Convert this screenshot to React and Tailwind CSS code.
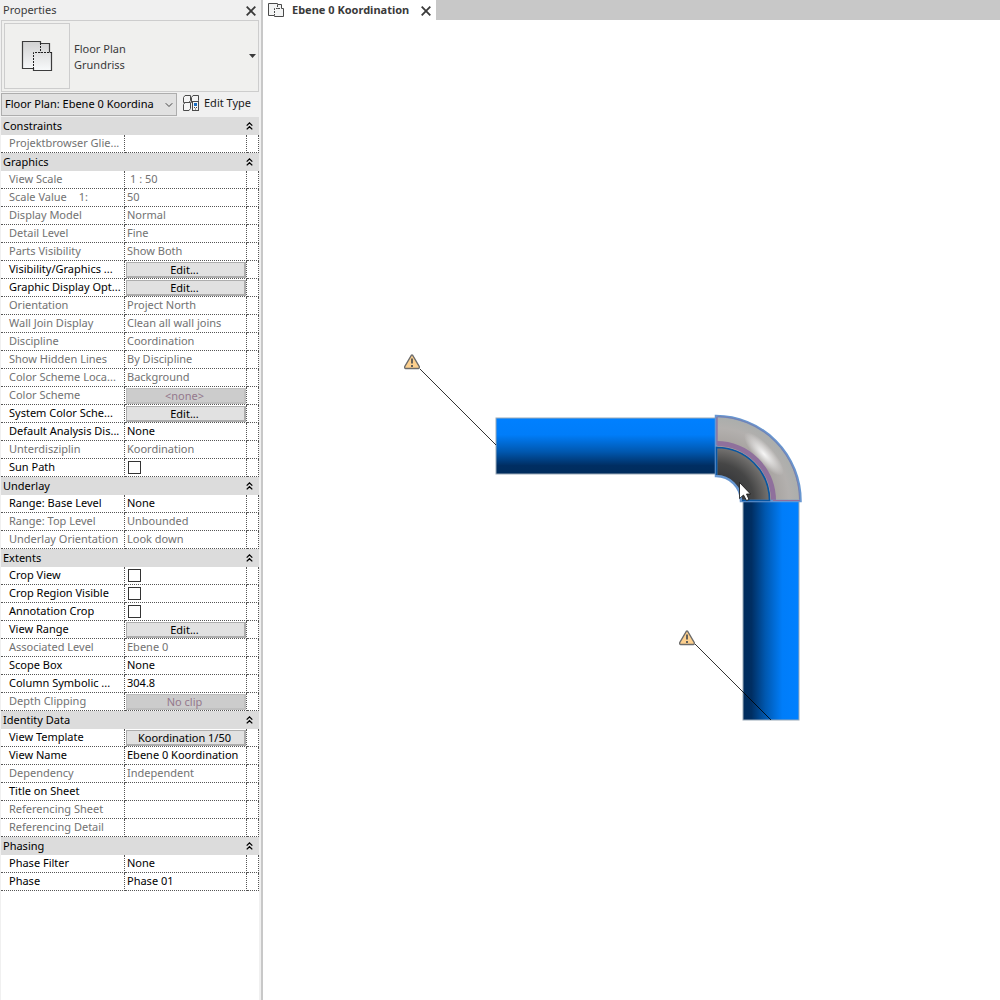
import { ChevronDown } from 'lucide-react';

const sections = [
  {
    title: 'Constraints',
    rows: [{ label: 'Projektbrowser Glie...', value: '', readOnly: true }],
  },
  {
    title: 'Graphics',
    rows: [
      { label: 'View Scale', value: '1 : 50', readOnly: true, indent: true },
      { label: 'Scale Value', suffix: '1:', value: '50', readOnly: true },
      { label: 'Display Model', value: 'Normal', readOnly: true },
      { label: 'Detail Level', value: 'Fine', readOnly: true },
      { label: 'Parts Visibility', value: 'Show Both', readOnly: true },
      { label: 'Visibility/Graphics ...', value: 'Edit...', type: 'button' },
      { label: 'Graphic Display Opt...', value: 'Edit...', type: 'button' },
      { label: 'Orientation', value: 'Project North', readOnly: true },
      { label: 'Wall Join Display', value: 'Clean all wall joins', readOnly: true },
      { label: 'Discipline', value: 'Coordination', readOnly: true },
      { label: 'Show Hidden Lines', value: 'By Discipline', readOnly: true },
      { label: 'Color Scheme Loca...', value: 'Background', readOnly: true },
      { label: 'Color Scheme', value: '<none>', type: 'button', readOnly: true },
      { label: 'System Color Sche...', value: 'Edit...', type: 'button' },
      { label: 'Default Analysis Dis...', value: 'None' },
      { label: 'Unterdisziplin', value: 'Koordination', readOnly: true },
      { label: 'Sun Path', type: 'checkbox' },
    ],
  },
  {
    title: 'Underlay',
    rows: [
      { label: 'Range: Base Level', value: 'None' },
      { label: 'Range: Top Level', value: 'Unbounded', readOnly: true },
      { label: 'Underlay Orientation', value: 'Look down', readOnly: true },
    ],
  },
  {
    title: 'Extents',
    rows: [
      { label: 'Crop View', type: 'checkbox' },
      { label: 'Crop Region Visible', type: 'checkbox' },
      { label: 'Annotation Crop', type: 'checkbox' },
      { label: 'View Range', value: 'Edit...', type: 'button' },
      { label: 'Associated Level', value: 'Ebene 0', readOnly: true },
      { label: 'Scope Box', value: 'None' },
      { label: 'Column Symbolic ...', value: '304.8' },
      { label: 'Depth Clipping', value: 'No clip', type: 'button', readOnly: true },
    ],
  },
  {
    title: 'Identity Data',
    rows: [
      { label: 'View Template', value: 'Koordination 1/50', type: 'button' },
      { label: 'View Name', value: 'Ebene 0 Koordination' },
      { label: 'Dependency', value: 'Independent', readOnly: true },
      { label: 'Title on Sheet', value: '' },
      { label: 'Referencing Sheet', value: '', readOnly: true },
      { label: 'Referencing Detail', value: '', readOnly: true },
    ],
  },
  {
    title: 'Phasing',
    rows: [
      { label: 'Phase Filter', value: 'None' },
      { label: 'Phase', value: 'Phase 01' },
    ],
  },
];

const CloseIcon = () => (
  <svg width="10" height="10" viewBox="0 0 10 10" fill="none" stroke="#3a3a3a" strokeWidth="1.8">
    <path d="M0.7 0.7 L9.3 9.3 M9.3 0.7 L0.7 9.3" />
  </svg>
);

const CollapseIcon = () => (
  <svg width="7" height="8" viewBox="0 0 7 8" fill="none" stroke="#000" strokeWidth="1.3">
    <path d="M0.7 3.6 L3.5 0.9 L6.3 3.6 M0.7 7.4 L3.5 4.7 L6.3 7.4" />
  </svg>
);

const FloorPlanIcon = () => (
  <svg width="32" height="32" viewBox="0 0 32 32" fill="none">
    <defs>
      <linearGradient id="sheet" x1="0" y1="0" x2="0" y2="1">
        <stop offset="0" stopColor="#d2d2d2" />
        <stop offset="1" stopColor="#f8fafb" />
      </linearGradient>
    </defs>
    <path d="M1.5 1.5 H19.5 V3.5 H28.5 V12.5 H30.5 V30.5 H12.5 V28.5 H1.5 Z" fill="url(#sheet)" />
    <path d="M12.5 28.5 H1.5 V1.5 H19.5 V3.5 H28.5 V12.5 M30.5 12 V30.5 H12.5 V28" stroke="#3c3c3c" strokeWidth="1.2" />
    <path d="M19.5 3 V12.5 M31 12.5 H12.5 V29" stroke="#222" strokeDasharray="2 1" />
  </svg>
);

const TabIcon = () => (
  <svg width="16" height="15" viewBox="0 0 16 15" fill="none" stroke="#4a4a4a">
    <path d="M0.5 0.5 H9.5 V1.5 H13.5 V5.5 H15.5 V13.5 H6.5 V12.5 H0.5 Z" fill="#f3f4f4" />
    <path d="M9.5 2 V5.5 H6.5 V12 M10 5.5 H13" strokeDasharray="2 1" />
  </svg>
);

const EditTypeIcon = () => (
  <svg width="17" height="17" viewBox="0 0 17 17" fill="none">
    <g fill="#f4f4f4" stroke="#4a4a4a">
      <path d="M0.5 2.5 L2 0.5 H7.5 V5.5 L6 7.5 H0.5 Z" />
      <path d="M8.5 2.5 L10 0.5 H15.5 V5.5 L14 7.5 H8.5 Z" />
      <path d="M0.5 9.5 L2 7.5 H7.5 V13.5 L6 15.5 H0.5 Z" />
      <rect x="9.5" y="6.5" width="6" height="9" />
    </g>
    <rect x="11" y="8" width="3" height="3" fill="#1b6ec2" />
    <path d="M11 12.5 H12 M13 12.5 H14 M12 14 H13" stroke="#4a4a4a" />
  </svg>
);

const PropertyValue = ({ row, id }) => {
  if (row.type === 'button') {
    return (
      <button
        id={id}
        disabled={row.readOnly}
        className="mt-px ml-px block h-4 w-[120px] border border-r-2 border-b-2 border-[#adadad] bg-[#e1e1e1] pr-[2px] text-center leading-[14px] text-black disabled:border-[#bfbfbf] disabled:bg-[#cccccc] disabled:text-[#94798c]"
      >
        {row.value}
      </button>
    );
  }
  if (row.type === 'checkbox') {
    return <input id={id} type="checkbox" className="mt-[2px] ml-[3px] block size-[13px] appearance-none border border-[#333333] bg-white checked:bg-[#333333]" />;
  }
  return <div className={row.indent ? 'h-[17px] pl-[5px]' : 'h-[17px] pl-[2px]'}>{row.value}</div>;
};

const PropertyRow = ({ row }) => {
  const id = row.label.toLowerCase().replace(/[^a-z]+/g, '-');
  const isControl = Boolean(row.type);
  return (
    <tr className={row.readOnly ? 'text-[#727272]' : 'text-black'}>
      <th scope="row" className="h-[18px] border-r border-b border-dotted border-[#555555] p-0 text-left align-top font-normal whitespace-nowrap">
        <div className="h-[17px] pl-2 leading-[15px]">
          {isControl ? <label htmlFor={id}>{row.label}</label> : row.label}
          {row.suffix && <span className="pl-3">{row.suffix}</span>}
        </div>
      </th>
      <td className="h-[18px] border-r border-b border-dotted border-[#555555] p-0 align-top leading-[15px] whitespace-nowrap">
        <PropertyValue row={row} id={id} />
      </td>
      <td className="h-[18px] border-r border-b border-dotted border-[#555555] p-0" />
    </tr>
  );
};

const PropertiesPanel = () => (
  <aside className="flex w-[263px] shrink-0 flex-col border-r-2 border-[#c8c8c8] bg-[#f0f0f0] pr-[2px] pl-px">
    <header className="flex h-5 items-center justify-between pt-px pr-[3px] pl-[2px] text-[#3a3a3a]">
      <h1>Properties</h1>
      <button aria-label="Close properties"><CloseIcon /></button>
    </header>

    {/* Type selector */}
    <button className="flex items-center border border-[#cdcdcd] bg-[#f0f0ee] p-[2px] text-left text-[#3a3a3a]">
      <span className="flex size-[66px] items-center justify-center border border-[#cdcdcd]">
        <FloorPlanIcon />
      </span>
      <span className="flex-1 pt-px pl-1 leading-4">
        Floor Plan
        <br />
        Grundriss
      </span>
      <svg width="7" height="4" viewBox="0 0 7 4"><path d="M0 0 H7 L3.5 4 Z" fill="#3a3a3a" /></svg>
    </button>

    <div className="flex items-center pt-px pb-px">
      <div className="relative">
        <select aria-label="Instance" className="block h-[23px] w-[176px] appearance-none border border-[#adadad] bg-[#e1e1e1] pr-4 pl-[3px] text-black">
          <option>Floor Plan: Ebene 0 Koordina</option>
        </select>
        <ChevronDown className="pointer-events-none absolute top-[6px] right-[2px] size-3 text-[#444444]" strokeWidth={2} />
      </div>
      <button className="flex items-center gap-1 pb-[2px] pl-[6px] text-[#1a1a1a]">
        <EditTypeIcon />
        Edit Type
      </button>
    </div>

    <div className="flex-1 bg-white">
      <table className="w-full table-fixed border-separate border-spacing-0">
        <colgroup>
          <col className="w-[124px]" />
          <col className="w-[122px]" />
          <col />
        </colgroup>
        {sections.map((section) => (
          <tbody key={section.title}>
            <tr className="bg-[#dcdcdc] text-black">
              <th colSpan={3} className="h-[18px] p-0 font-normal">
                <button className="flex h-[18px] w-full items-center justify-between pr-[6px] pl-[2px]">
                  {section.title}
                  <CollapseIcon />
                </button>
              </th>
            </tr>
            {section.rows.map((row) => (
              <PropertyRow key={row.label} row={row} />
            ))}
          </tbody>
        ))}
      </table>
    </div>
  </aside>
);

const Warning = ({ x, y }) => (
  <g transform={`translate(${x} ${y})`}>
    <path d="M7.3 1.3 Q8 0.6 8.7 1.3 L15.3 12.6 Q15.6 14.5 14.4 14.5 H1.6 Q0.4 14.5 0.7 12.6 Z" fill="#fdd08e" stroke="#6b6b6b" strokeWidth="1.3" strokeLinejoin="round" />
    <path d="M8 4.5 V9.5 M8 11 V13" stroke="#555" strokeWidth="1.8" />
  </g>
);

const Drawing = () => (
  <svg width="737" height="980" viewBox="263 20 737 980" role="img" aria-label="Pipe elbow in floor plan" className="block">
    <defs>
      <linearGradient id="pipeH" x1="0" y1="0" x2="0" y2="1">
        <stop offset="0" stopColor="#0080ff" />
        <stop offset="0.3" stopColor="#007df9" />
        <stop offset="0.6" stopColor="#0058b0" />
        <stop offset="0.85" stopColor="#002e62" />
        <stop offset="1" stopColor="#002c5c" />
      </linearGradient>
      <linearGradient id="pipeV" x1="1" y1="0" x2="0" y2="0">
        <stop offset="0" stopColor="#0080ff" />
        <stop offset="0.3" stopColor="#007df9" />
        <stop offset="0.6" stopColor="#0058b0" />
        <stop offset="0.85" stopColor="#002e62" />
        <stop offset="1" stopColor="#002c5c" />
      </linearGradient>
      <radialGradient id="inner" gradientUnits="userSpaceOnUse" cx="716" cy="501" r="54">
        <stop offset="0.48" stopColor="#3a3b3d" />
        <stop offset="0.7" stopColor="#464646" />
        <stop offset="1" stopColor="#777573" />
      </radialGradient>
      <radialGradient id="outer" gradientUnits="userSpaceOnUse" cx="716" cy="501" r="86">
        <stop offset="0.65" stopColor="#a5a19e" />
        <stop offset="0.85" stopColor="#b3b0ae" />
        <stop offset="1" stopColor="#a9adab" />
      </radialGradient>
      <radialGradient id="shine">
        <stop offset="0" stopColor="#fff" stopOpacity="0.9" />
        <stop offset="1" stopColor="#fff" stopOpacity="0" />
      </radialGradient>
    </defs>

    <rect x="496" y="418" width="220" height="56" fill="url(#pipeH)" stroke="#9aa9b8" />
    <rect x="743" y="501" width="56" height="219" fill="url(#pipeV)" stroke="#9aa9b8" />

    {/* Elbow */}
    <path d="M716 416 A85 85 0 0 1 801 501 H741 A25 25 0 0 0 716 476 Z" fill="url(#outer)" />
    <ellipse cx="764" cy="454" rx="28" ry="9" transform="rotate(48 764 454)" fill="url(#shine)" />
    <path d="M716 447 A54 54 0 0 1 770 501 H741 A25 25 0 0 0 716 476 Z" fill="url(#inner)" />
    <path d="M716 443.5 A57.5 57.5 0 0 1 773.5 501" fill="none" stroke="#8f709c" strokeWidth="5" />
    <path d="M716 416 A85 85 0 0 1 800.500 501 H741 A25 25 0 0 0 716 476 Z" fill="none" stroke="#6796d0" strokeWidth="2.500" />
    <path d="M717 417 V445 M773 500.500 H800" stroke="#8f709c" strokeWidth="1.2" />
    <path d="M717.500 416.500 A84 84 0 0 1 799.500 499.500" fill="none" stroke="#80749f" strokeWidth="0.7" />
    <path d="M716.500 475 V447.500 A53 53 0 0 1 769.500 500.500 H742" fill="none" stroke="#0756a3" strokeWidth="1.6" />

    <g stroke="#000" strokeWidth="0.8">
      <path d="M420 369 L496 445" />
      <path d="M695 644 L771 720" />
    </g>
    <Warning x={404} y={354} />
    <Warning x={679} y={630} />

    {/* Pointer */}
    <path d="M739.500 482.500 V498.500 L743.500 495 L746.500 500.500 L749 499.500 L746.500 494 H750.500 Z" fill="#fff" stroke="#111" strokeWidth="0.8" />
  </svg>
);

const App = () => (
  <div className="flex min-h-screen bg-white font-['Noto_Sans','Open_Sans',sans-serif] text-[11px]">
    <PropertiesPanel />
    <main className="flex min-w-0 flex-1 flex-col">
      <nav className="flex h-5 bg-[#c8c8c8]">
        <div className="flex items-center gap-2 bg-white px-[5px] pt-px">
          <TabIcon />
          <a href="#view" className="pr-1 font-bold text-[#3a3a3a]">Ebene 0 Koordination</a>
          <button aria-label="Close view"><CloseIcon /></button>
        </div>
      </nav>
      <div id="view" className="flex-1 overflow-hidden bg-white">
        <Drawing />
      </div>
    </main>
  </div>
);

export default App;
